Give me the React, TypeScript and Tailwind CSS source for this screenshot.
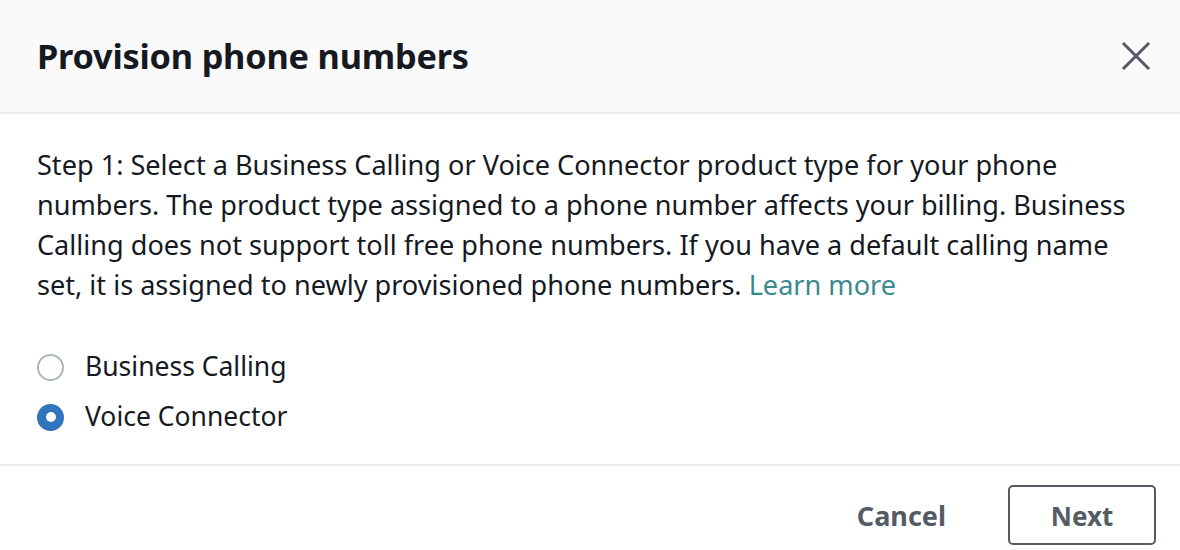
import React from "react";

export default function App() {
  return (
    <div
      className="w-[1180px] h-[550px] overflow-hidden bg-white text-[#16191f]"
      style={{ fontFamily: '"Noto Sans", "Open Sans", Arial, sans-serif' }}
    >
      <div className="h-[114px] bg-[#fafafa] border-b-2 border-[#eaeded] flex items-center justify-between pl-[37px] pr-[29px]">
        <h1 className="text-[34.3px] font-bold leading-none tracking-[-0.2px]">Provision phone numbers</h1>
        <svg width="30" height="30" viewBox="0 0 30 30" className="text-[#545b64]">
          <path d="M3 3 L27 27 M27 3 L3 27" stroke="currentColor" strokeWidth="3" strokeLinecap="square" />
        </svg>
      </div>
      <div className="h-[352px] border-b-2 border-[#eaeded] pl-[37px] pr-[37px] pt-[31px]">
        <p className="text-[27.1px] leading-[40px]">
          Step 1: Select a Business Calling or Voice Connector product type for your phone numbers. The product
          type assigned to a phone number affects your billing. Business Calling does not support toll free phone
          numbers. If you have a default calling name set, it is assigned to newly provisioned phone numbers.{" "}
          <a className="text-[#3b8a8d]">Learn more</a>
        </p>
        <div className="mt-[42px] flex flex-col gap-[10px]">
          <label className="flex items-center h-[40px] text-[26.5px]">
            <span className="w-[27px] h-[27px] rounded-full border-2 border-[#aab7b8] bg-white" />
            <span className="ml-[21px]">Business Calling</span>
          </label>
          <label className="flex items-center h-[40px] text-[26.5px]">
            <span className="w-[27px] h-[27px] rounded-full bg-[#2f74bd] flex items-center justify-center">
              <span className="w-[10px] h-[10px] rounded-full bg-white" />
            </span>
            <span className="ml-[21px]">Voice Connector</span>
          </label>
        </div>
      </div>
      <div className="flex items-start justify-end pr-[24px] pt-[19px] gap-[62px]">
        <button className="h-[62px] text-[27px] font-bold text-[#545b64]">Cancel</button>
        <button className="w-[148px] h-[60px] rounded-[5px] border-2 border-[#545b64] text-[26px] font-bold text-[#545b64] pt-[3px]">
          Next
        </button>
      </div>
    </div>
  );
}
